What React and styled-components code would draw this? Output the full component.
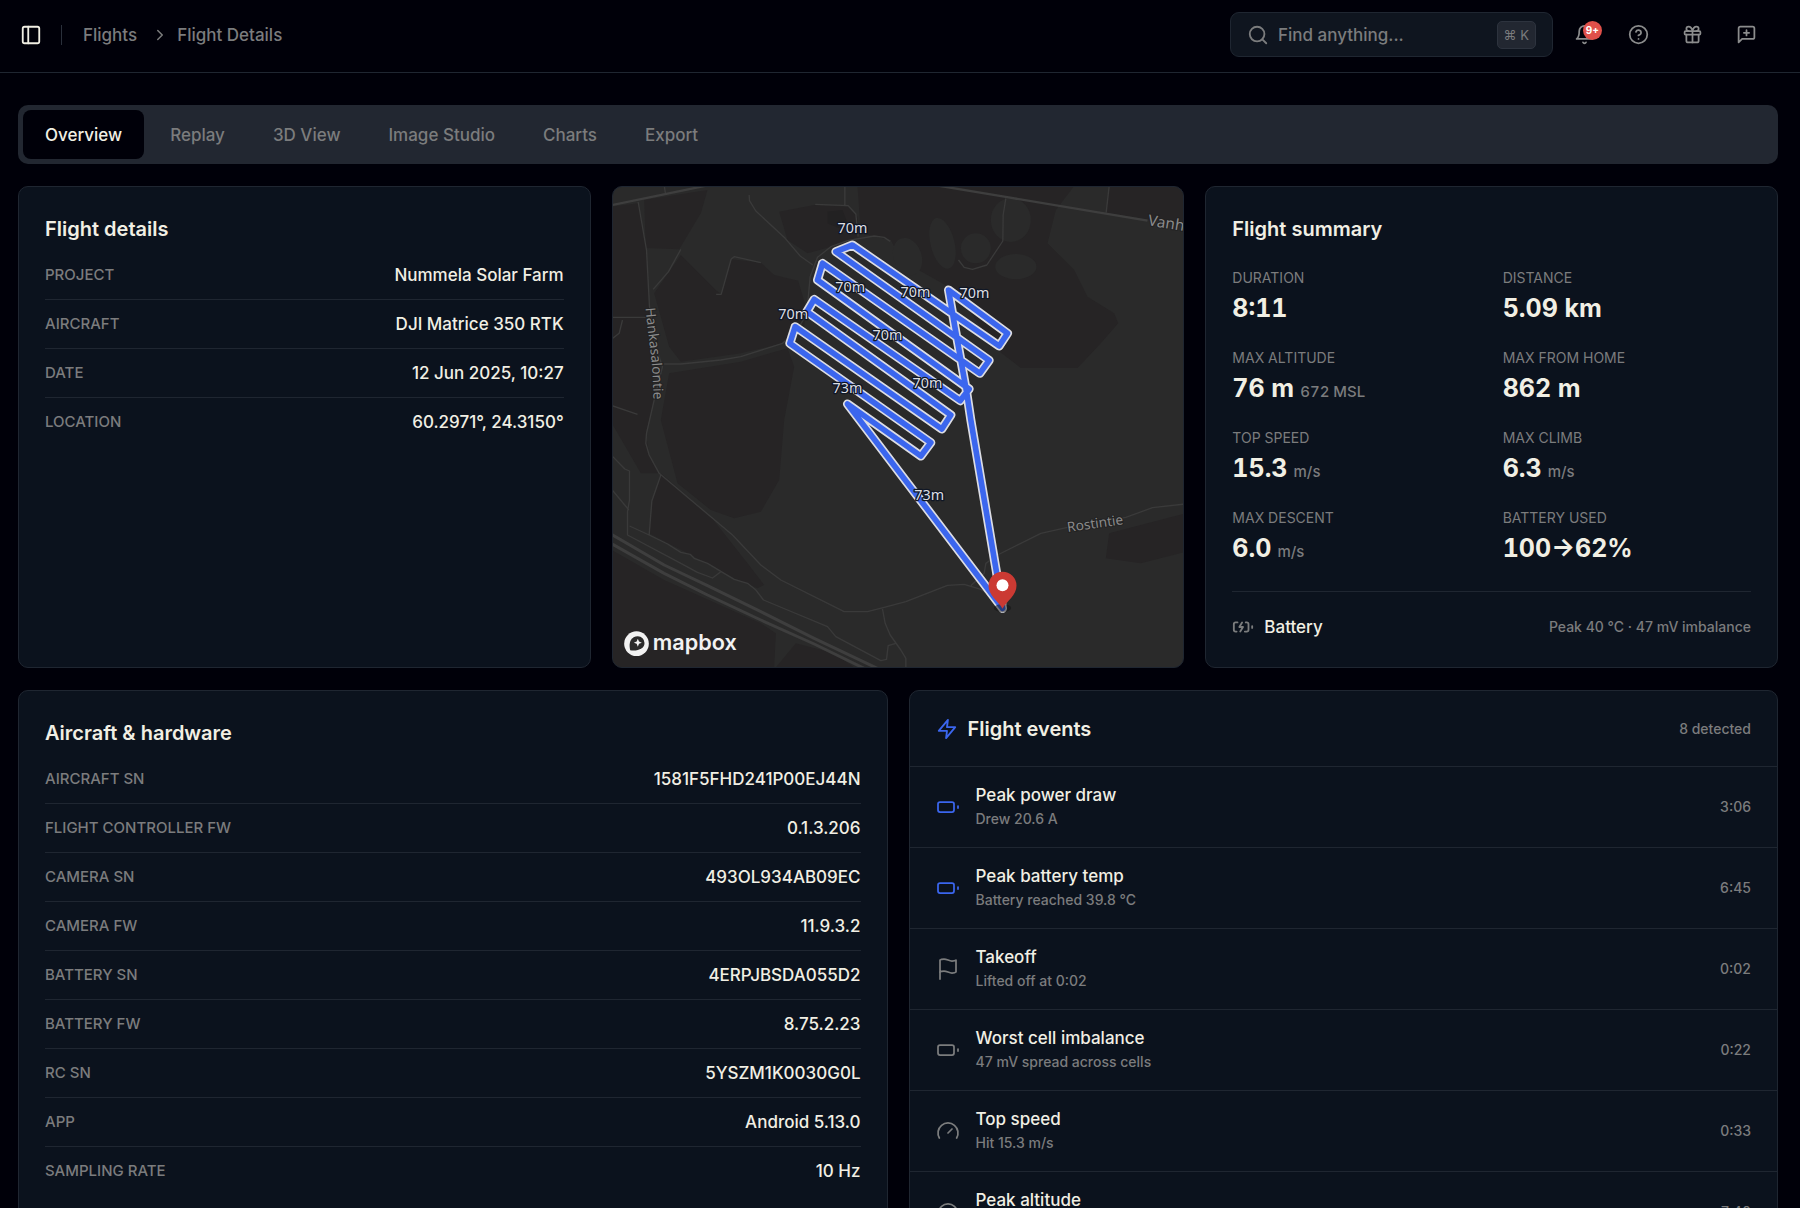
import React from "react";
import styled, { createGlobalStyle, css } from "styled-components";

const c = {
  bg: "#000009",
  card: "#0b121d",
  field: "#0f151f",
  border: "#1f2631",
  raised: "#222731",
  text: "#f1efe4",
  muted: "#7b7c7d",
  blue: "#3b66ee",
  red: "#e0504a",
};

const GlobalStyle = createGlobalStyle`
  *, *::before, *::after { box-sizing: border-box; }
  html { scrollbar-width: none; background: ${c.bg}; }
  body {
    margin: 0;
    background: ${c.bg};
    color: ${c.text};
    font-family: Inter, "Liberation Sans", sans-serif;
    font-size: 17px;
    line-height: 24px;
    -webkit-font-smoothing: antialiased;
  }
  h2, p, dl, dt, dd, ul, ol { margin: 0; padding: 0; }
  ul, ol { list-style: none; }
  button, input { font: inherit; color: inherit; }
  a { color: inherit; text-decoration: none; }
`;

/* ---------- icons ---------- */

const Svg = styled.svg.attrs({
  viewBox: "0 0 24 24",
  fill: "none",
  stroke: "currentColor",
  strokeLinecap: "round",
  strokeLinejoin: "round",
  "aria-hidden": true,
})`
  display: block;
  flex: none;
  width: ${(p) => p.$size}px;
  height: ${(p) => p.$size}px;
  stroke-width: ${(p) => p.$weight || 2};
`;

const shapes = {
  panel: (
    <>
      <rect x="3" y="3" width="18" height="18" rx="2" />
      <path d="M9 3v18" />
    </>
  ),
  chevron: <path d="m9 18 6-6-6-6" />,
  search: (
    <>
      <circle cx="11" cy="11" r="8" />
      <path d="m21 21-4.3-4.3" />
    </>
  ),
  bell: (
    <>
      <path d="M6 8a6 6 0 0 1 12 0c0 7 3 9 3 9H3s3-2 3-9" />
      <path d="M10.3 21a1.94 1.94 0 0 0 3.4 0" />
    </>
  ),
  help: (
    <>
      <circle cx="12" cy="12" r="10" />
      <path d="M9.09 9a3 3 0 0 1 5.83 1c0 2-3 3-3 3" />
      <path d="M12 17h.01" />
    </>
  ),
  gift: (
    <>
      <rect x="3" y="8" width="18" height="4" rx="1" />
      <path d="M12 8v13" />
      <path d="M19 12v7a2 2 0 0 1-2 2H7a2 2 0 0 1-2-2v-7" />
      <path d="M7.5 8a2.5 2.5 0 0 1 0-5A4.8 8 0 0 1 12 8a4.8 8 0 0 1 4.5-5 2.5 2.5 0 0 1 0 5" />
    </>
  ),
  feedback: (
    <>
      <path d="M21 15a2 2 0 0 1-2 2H7l-4 4V5a2 2 0 0 1 2-2h14a2 2 0 0 1 2 2z" />
      <path d="M12 7v6M9 10h6" />
    </>
  ),
  charging: (
    <>
      <path d="M15 7h1a2 2 0 0 1 2 2v6a2 2 0 0 1-2 2h-2" />
      <path d="M6 7H4a2 2 0 0 0-2 2v6a2 2 0 0 0 2 2h1" />
      <path d="m11 7-3 5h4l-3 5" />
      <path d="M22 11v2" />
    </>
  ),
  zap: <path d="M13 2 3 14h9l-1 8 10-12h-9l1-8z" />,
  battery: (
    <>
      <rect x="2" y="7" width="16" height="10" rx="2" />
      <path d="M22 11v2" />
    </>
  ),
  flag: (
    <>
      <path d="M4 15s1-1 4-1 5 2 8 2 4-1 4-1V3s-1 1-4 1-5-2-8-2-4 1-4 1z" />
      <path d="M4 22v-7" />
    </>
  ),
  gauge: (
    <>
      <path d="m12 14 4-4" />
      <path d="M3.34 19a10 10 0 1 1 17.32 0" />
    </>
  ),
};

const Icon = ({ name, size = 22, weight }) => (
  <Svg $size={size} $weight={weight}>
    {shapes[name]}
  </Svg>
);

/* ---------- header ---------- */

const Header = styled.header`
  display: flex;
  align-items: center;
  justify-content: space-between;
  padding: 12px 39px 15px 20px;
  border-bottom: 1px solid ${c.border};
`;

const HeaderSide = styled.div`
  display: flex;
  align-items: center;
`;

const PanelToggle = styled.button`
  padding: 0;
  border: 0;
  background: none;
  cursor: pointer;
`;

const Separator = styled.span`
  width: 1px;
  height: 20px;
  margin: 0 21px 0 19px;
  background: #2a303b;
`;

const Crumbs = styled.ol`
  display: flex;
  align-items: center;
  color: ${c.muted};
  font-weight: 500;
`;

const Crumb = styled.li`
  display: flex;
  align-items: center;

  svg {
    margin: 0 8px 0 14px;
  }
`;

const SearchBox = styled.label`
  display: flex;
  align-items: center;
  gap: 9px;
  width: 323px;
  height: 45px;
  margin-right: 9px;
  padding: 0 16px;
  border: 1px solid ${c.border};
  border-radius: 9px;
  background: ${c.field};
  color: ${c.muted};
`;

const SearchInput = styled.input`
  flex: 1;
  min-width: 0;
  padding: 0;
  border: 0;
  outline: 0;
  background: none;
  font-weight: 500;

  &::placeholder {
    color: ${c.muted};
    opacity: 1;
  }
`;

const Kbd = styled.kbd`
  padding: 1px 6px;
  border: 1px solid #2d333e;
  border-radius: 5px;
  background: ${c.raised};
  font-family: Inter, "DejaVu Sans", sans-serif;
  font-size: 13px;
`;

const HeaderActions = styled.div`
  display: flex;
  gap: 10px;
`;

const HeaderButton = styled.button`
  position: relative;
  display: grid;
  place-items: center;
  width: 44px;
  height: 44px;
  margin-right: ${(p) => (p.$last ? "-7px" : 0)};
  padding: 0;
  border: 0;
  background: none;
  color: #8b8c8d;
  cursor: pointer;
`;

const Badge = styled.span`
  position: absolute;
  top: 8px;
  right: 4px;
  width: 19px;
  height: 19px;
  border-radius: 50%;
  background: ${c.red};
  color: #fff;
  font-size: 10px;
  font-weight: 700;
  line-height: 19px;
  text-align: center;
`;

/* ---------- page ---------- */

const Main = styled.main`
  display: grid;
  gap: 22px;
  padding: 32px 22px 22px 18px;
`;

const Tabs = styled.div`
  display: flex;
  gap: 4px;
  padding: 5px;
  border-radius: 10px;
  background: ${c.raised};
`;

const Tab = styled.button`
  height: 49px;
  padding: 0 22px;
  border: 0;
  border-radius: 8px;
  background: ${(p) => (p.$active ? c.bg : "none")};
  color: ${(p) => (p.$active ? c.text : c.muted)};
  font-weight: 500;
  cursor: pointer;
`;

const Columns = styled.div`
  display: grid;
  grid-template-columns: repeat(${(p) => p.$count}, minmax(0, 1fr));
  gap: 21px;
`;

const cardBox = css`
  border: 1px solid ${c.border};
  border-radius: 10px;
  overflow: hidden;
`;

const Card = styled.section`
  ${cardBox}
  padding: ${(p) => (p.$flush ? 0 : "26px")};
  background: ${c.card};
`;

const CardTitle = styled.h2`
  font-size: 20px;
  font-weight: 600;
  line-height: 32px;
`;

const Facts = styled.dl`
  margin-top: 6px;
`;

const Fact = styled.div`
  display: flex;
  align-items: center;
  justify-content: space-between;
  height: 49px;
  border-bottom: 1px solid ${c.border};

  &:last-child {
    border-bottom-color: transparent;
  }
`;

const FactLabel = styled.dt`
  color: ${c.muted};
  font-size: 15px;
  font-weight: 500;
`;

const FactValue = styled.dd`
  font-weight: 500;
`;

const Stats = styled.dl`
  display: grid;
  grid-template-columns: 1fr 1fr;
  gap: 24px 22px;
  padding: 23px 0 27px;
  border-bottom: 1px solid ${c.border};
`;

const Stat = styled.div`
  display: grid;
  gap: 4px;
`;

const StatLabel = styled.dt`
  color: ${c.muted};
  font-size: 14px;
  line-height: 20px;
`;

const StatValue = styled.dd`
  font-size: 25px;
  font-weight: 700;
  line-height: 32px;
  font-variant-numeric: tabular-nums;
`;

const Unit = styled.span`
  margin-left: 6px;
  color: ${c.muted};
  font-size: 15px;
  font-weight: 500;
  line-height: 16px;
`;

const BatteryRow = styled.div`
  display: flex;
  align-items: center;
  gap: 10px;
  padding: 23px 0 2px;
  color: ${c.muted};
`;

const BatteryName = styled.span`
  flex: 1;
  color: ${c.text};
  font-weight: 500;
`;

const Note = styled.span`
  color: ${c.muted};
  font-size: 14px;
  font-weight: 500;
`;

const EventsHeader = styled.div`
  display: flex;
  align-items: center;
  gap: 10px;
  height: 76px;
  padding: 0 26px;
  border-bottom: 1px solid ${c.border};

  svg {
    color: ${c.blue};
  }

  h2 {
    flex: 1;
  }
`;

const EventRow = styled.li`
  display: flex;
  align-items: center;
  gap: 16px;
  height: 81px;
  padding: 0 26px;
  border-bottom: 1px solid ${c.border};

  svg {
    color: ${(p) => (p.$accent ? c.blue : c.muted)};
  }
`;

const EventText = styled.div`
  flex: 1;
`;

const EventTitle = styled.p`
  font-weight: 500;
`;

const EventDetail = styled.p`
  color: ${c.muted};
  font-size: 14px;
  font-weight: 500;
`;

/* ---------- map ---------- */

const MapCard = styled.section`
  ${cardBox}
  display: grid;
  background: #2a2a2a;
`;

const MapSvg = styled.svg`
  display: block;
  width: 100%;
  height: 100%;
  min-height: 0;
  font-family: "Noto Sans", "Open Sans", sans-serif;
`;

const Fields = styled.g`
  fill: #262425;
`;

const Roads = styled.g`
  fill: none;
  stroke: ${(p) => (p.$major ? "#3e3e3e" : "#3a3a3a")};
  stroke-width: ${(p) => (p.$major ? 9 : 4)};
  stroke-linejoin: round;
`;

const RoadName = styled.text`
  fill: #8b8b8b;
  stroke: #222223;
  stroke-width: 6;
  paint-order: stroke;
  font-size: ${(p) => p.$size || 41}px;
`;

const Track = styled.path`
  fill: none;
  stroke: ${(p) => (p.$casing ? "#dcdde4" : c.blue)};
  stroke-width: ${(p) => (p.$casing ? 27 : 17)};
  stroke-linejoin: round;
  stroke-linecap: round;
`;

const Altitude = styled.text`
  fill: #dcdee3;
  stroke: #101725;
  stroke-width: 8;
  stroke-linejoin: round;
  paint-order: stroke;
  font-size: 43px;
  text-anchor: middle;
`;

const Wordmark = styled.text`
  fill: #f2f2f2;
  font-family: Inter, "Open Sans", sans-serif;
  font-size: 65px;
  font-weight: 600;
`;

const trackPath =
  "M1205 1285 L1185 1165 L1110 720 L1098 640 L1062 440 L1043 330 L1220 460 L1195 498 L755 195 L705 215 L1165 541 L1137 580 L665 250 L650 300 L1105 627 L1078 662 L640 358 L618 395 L1050 705 L1023 747 L583 440 L567 490 L990 788 L960 828 L740 672 L1205 1285";

const altitudes = [
  [755, 145, "70m"],
  [748, 322, "70m"],
  [577, 402, "70m"],
  [860, 465, "70m"],
  [740, 625, "73m"],
  [944, 337, "70m"],
  [1121, 338, "70m"],
  [980, 608, "70m"],
  [985, 945, "73m"],
];

const FlightMap = () => (
  <MapCard aria-label="Flight map">
    <MapSvg viewBox="0 0 1713 1440" preserveAspectRatio="xMidYMid slice">
      <g transform="translate(-36 -21)">
        <Fields>
          <path d="M130 60 L320 30 L300 100 L235 208 L135 204Z" />
          <path d="M33 80 L112 70 L137 210 L145 380 L160 660 L135 760 L145 825 L175 880 L120 880 L33 730Z" />
          <path d="M240 225 L345 330 L362 343 L392 238 L480 248 L520 285 L592 302 L615 380 L610 440 L545 490 L420 520 L240 545 L205 500 L160 340Z" />
          <path d="M205 580 L420 545 L560 505 L580 560 L550 720 L535 900 L480 995 L400 1015 L330 990 L230 910 L180 720Z" />
          <path d="M535 95 L640 75 L740 80 L770 110 L775 170 L690 200 L620 220 L560 180Z" />
          <path d="M770 18 L1420 18 L1365 90 L1340 190 L1420 270 L1460 350 L1540 400 L1552 430 L1500 490 L1430 564 L1260 564 L1190 510 L1060 330 L900 240 L870 180 L780 160Z" />
          <path d="M180 880 L330 1010 L440 1150 L490 1215 L470 1225 L400 1195 L280 1130 L145 1060 L155 960Z" />
          <path d="M33 1110 L190 1200 L480 1330 L525 1360 L520 1462 L33 1462Z" />
          <path d="M525 1462 L585 1390 L700 1420 L760 1462Z" />
          <path d="M1525 1060 L1755 1000 L1755 1115 L1620 1150 L1515 1135Z" />
          <path d="M1525 18 L1755 18 L1755 130 L1640 118 L1516 98Z" />
        </Fields>
        <g fill="#2a2a2a">
          <ellipse cx="1025" cy="190" rx="36" ry="78" transform="rotate(-14 1025 190)" />
          <ellipse cx="920" cy="230" rx="42" ry="58" transform="rotate(-20 920 230)" />
          <ellipse cx="1230" cy="120" rx="60" ry="66" />
          <ellipse cx="1245" cy="260" rx="62" ry="38" />
          <ellipse cx="1125" cy="205" rx="45" ry="45" />
        </g>
        <path d="M680 95 L725 90 L740 130 L715 145 L680 130Z" fill="#222122" />

        <Roads>
          <path d="M190 15 L194 42 M112 66 L137 210 L146 380 L165 500 L185 560 L160 660 L137 760 L135 790 L145 825 L175 880 L395 1065 L480 1155 L540 1200 L730 1295 L800 1295 L850 1282 L915 1265 L1040 1216 L1090 1213 L1140 1228 L1190 1260" />
          <path d="M240 208 L203 275 L157 328 M346 343 H361 L391 237 L400 230 L480 248" />
          <path d="M445 45 L446 62 L465 93 L553 175 L598 228 L636 255" />
          <path d="M732 18 V75 M643 73 L742 77 L765 102 L772 170" />
          <path d="M868 184 L850 172 L820 168 L740 182 L690 200 L650 232 L628 290 L618 400 L590 450 L545 490 L420 530 L360 540 L240 552 H190" />
          <path d="M36 412 H140 M65 420 L55 460 L36 475 M36 678 L110 703" />
          <path d="M1525 18 L1516 98 M1215 55 L1207 105 L1206 183 L1158 255 L1115 268 L1090 262 L1073 240" />
          <path d="M1110 1217 L1150 1180 L1155 1150 L1190 1125 L1320 1060 L1400 1042 L1575 1012 L1655 983 L1752 972" />
          <path d="M36 830 L72 867 L86 873 V960 L80 995 V1065 L240 1150 L290 1177 L335 1194 L360 1175 M36 932 L84 990" />
          <path d="M180 885 L153 963 L145 1065 M86 1038 L145 1065 L200 1092 L240 1117 L268 1123 L280 1135 L320 1150 L400 1198 L440 1210 L465 1230 L488 1260 L560 1290 L680 1340 L705 1370 L840 1442 L857 1438 L862 1397 L885 1390" />
          <path d="M845 1287 L853 1330 L868 1365 L900 1410 L915 1435 V1465" />
        </Roads>
        <Roads $major>
          <path d="M30 76 L340 12 M1000 15 L1210 50 L1640 122" strokeWidth="7" />
          <path d="M30 1062 L190 1155 L320 1217 L480 1295 L640 1375 L840 1470" />
          <path d="M30 1090 L190 1180 L320 1245 L480 1320 L640 1392 L800 1470" />
        </Roads>

        <path id="west-road" d="M134 384 C140 460 158 540 158 680" fill="none" />
        <RoadName>
          <textPath href="#west-road">Hankasalontie</textPath>
        </RoadName>
        <RoadName $size={46} transform="translate(1640 136) rotate(9)">
          Vanh
        </RoadName>
        <RoadName transform="translate(1401 1056) rotate(-8)">Rostintie</RoadName>

        <Track $casing d={trackPath} />
        <Track d={trackPath} />
        {altitudes.map(([x, y, label]) => (
          <Altitude key={`${x}-${y}`} x={x} y={y + 15}>
            {label}
          </Altitude>
        ))}

        <ellipse cx="1205" cy="1284" rx="26" ry="12" fill="#111" opacity="0.5" />
        <path d="M1205 1286 C1192 1262 1163 1246 1163 1217 A42 42 0 1 1 1247 1217 C1247 1246 1218 1262 1205 1286Z" fill="#cb3a33" />
        <circle cx="1205" cy="1216" r="18" fill="#fff" />

        <a href="#mapbox" aria-label="Mapbox">
          <circle cx="107" cy="1391" r="37" fill="#f2f2f2" />
          <path d="M88 1411 C82 1385 92 1369 111 1369 A20 20 0 0 1 131 1389 C131 1405 113 1414 88 1411Z" fill="#2a2a2a" />
          <path d="M111 1376 L114.500 1384.500 L123 1388 L114.500 1391.500 L111 1400 L107.500 1391.500 L99 1388 L107.500 1384.500Z" fill="#f2f2f2" />
          <Wordmark x="156" y="1410">mapbox</Wordmark>
        </a>
      </g>
    </MapSvg>
  </MapCard>
);

/* ---------- content ---------- */

const tabs = ["Overview", "Replay", "3D View", "Image Studio", "Charts", "Export"];

const details = [
  ["PROJECT", "Nummela Solar Farm"],
  ["AIRCRAFT", "DJI Matrice 350 RTK"],
  ["DATE", "12 Jun 2025, 10:27"],
  ["LOCATION", "60.2971°, 24.3150°"],
];

const hardware = [
  ["AIRCRAFT SN", "1581F5FHD241P00EJ44N"],
  ["FLIGHT CONTROLLER FW", "0.1.3.206"],
  ["CAMERA SN", "493OL934AB09EC"],
  ["CAMERA FW", "11.9.3.2"],
  ["BATTERY SN", "4ERPJBSDA055D2"],
  ["BATTERY FW", "8.75.2.23"],
  ["RC SN", "5YSZM1K0030G0L"],
  ["APP", "Android 5.13.0"],
  ["SAMPLING RATE", "10 Hz"],
];

const stats = [
  ["DURATION", "8:11"],
  ["DISTANCE", "5.09 km"],
  ["MAX ALTITUDE", "76 m", "672 MSL"],
  ["MAX FROM HOME", "862 m"],
  ["TOP SPEED", "15.3", "m/s"],
  ["MAX CLIMB", "6.3", "m/s"],
  ["MAX DESCENT", "6.0", "m/s"],
  ["BATTERY USED", "100→62%"],
];

const events = [
  { icon: "battery", accent: true, title: "Peak power draw", detail: "Drew 20.6 A", time: "3:06" },
  { icon: "battery", accent: true, title: "Peak battery temp", detail: "Battery reached 39.8 °C", time: "6:45" },
  { icon: "flag", title: "Takeoff", detail: "Lifted off at 0:02", time: "0:02" },
  { icon: "battery", title: "Worst cell imbalance", detail: "47 mV spread across cells", time: "0:22" },
  { icon: "gauge", title: "Top speed", detail: "Hit 15.3 m/s", time: "0:33" },
  { icon: "gauge", title: "Peak altitude", detail: "Reached 76 m", time: "7:40" },
];

const FactList = ({ items }) => (
  <Facts>
    {items.map(([label, value]) => (
      <Fact key={label}>
        <FactLabel>{label}</FactLabel>
        <FactValue>{value}</FactValue>
      </Fact>
    ))}
  </Facts>
);

export default function App() {
  const [active, setActive] = React.useState("Overview");

  return (
    <>
      <GlobalStyle />
      <Header>
        <HeaderSide>
          <PanelToggle type="button" aria-label="Toggle sidebar">
            <Icon name="panel" />
          </PanelToggle>
          <Separator />
          <nav aria-label="Breadcrumb">
            <Crumbs>
              <Crumb>
                <a href="#flights">Flights</a>
              </Crumb>
              <Crumb>
                <Icon name="chevron" size={18} />
                <a href="#details" aria-current="page">Flight Details</a>
              </Crumb>
            </Crumbs>
          </nav>
        </HeaderSide>
        <HeaderSide>
          <SearchBox>
            <Icon name="search" />
            <SearchInput type="text" placeholder="Find anything..." aria-label="Find anything" />
            <Kbd>⌘ K</Kbd>
          </SearchBox>
          <HeaderActions>
            <HeaderButton type="button" aria-label="Notifications">
              <Icon name="bell" size={21} />
              <Badge>9+</Badge>
            </HeaderButton>
            <HeaderButton type="button" aria-label="Help">
              <Icon name="help" size={21} />
            </HeaderButton>
            <HeaderButton type="button" aria-label="What's new">
              <Icon name="gift" size={21} />
            </HeaderButton>
            <HeaderButton type="button" aria-label="Feedback" $last>
              <Icon name="feedback" size={21} />
            </HeaderButton>
          </HeaderActions>
        </HeaderSide>
      </Header>

      <Main>
        <Tabs role="tablist">
          {tabs.map((name) => (
            <Tab
              key={name}
              type="button"
              role="tab"
              aria-selected={name === active}
              $active={name === active}
              onClick={() => setActive(name)}
            >
              {name}
            </Tab>
          ))}
        </Tabs>

        <Columns $count={3}>
          <Card>
            <CardTitle>Flight details</CardTitle>
            <FactList items={details} />
          </Card>
          <FlightMap />
          <Card>
            <CardTitle>Flight summary</CardTitle>
            <Stats>
              {stats.map(([label, value, unit]) => (
                <Stat key={label}>
                  <StatLabel>{label}</StatLabel>
                  <StatValue>
                    {value}
                    {unit && <Unit>{unit}</Unit>}
                  </StatValue>
                </Stat>
              ))}
            </Stats>
            <BatteryRow>
              <Icon name="charging" />
              <BatteryName>Battery</BatteryName>
              <Note>Peak 40 °C · 47 mV imbalance</Note>
            </BatteryRow>
          </Card>
        </Columns>

        <Columns $count={2}>
          <Card>
            <CardTitle>Aircraft &amp; hardware</CardTitle>
            <FactList items={hardware} />
          </Card>
          <Card $flush>
            <EventsHeader>
              <Icon name="zap" size={22} />
              <CardTitle>Flight events</CardTitle>
              <Note>8 detected</Note>
            </EventsHeader>
            <ul>
              {events.map((event) => (
                <EventRow key={event.title} $accent={event.accent}>
                  <Icon name={event.icon} size={24} weight={1.75} />
                  <EventText>
                    <EventTitle>{event.title}</EventTitle>
                    <EventDetail>{event.detail}</EventDetail>
                  </EventText>
                  <Note as="time">{event.time}</Note>
                </EventRow>
              ))}
            </ul>
          </Card>
        </Columns>
      </Main>
    </>
  );
}
